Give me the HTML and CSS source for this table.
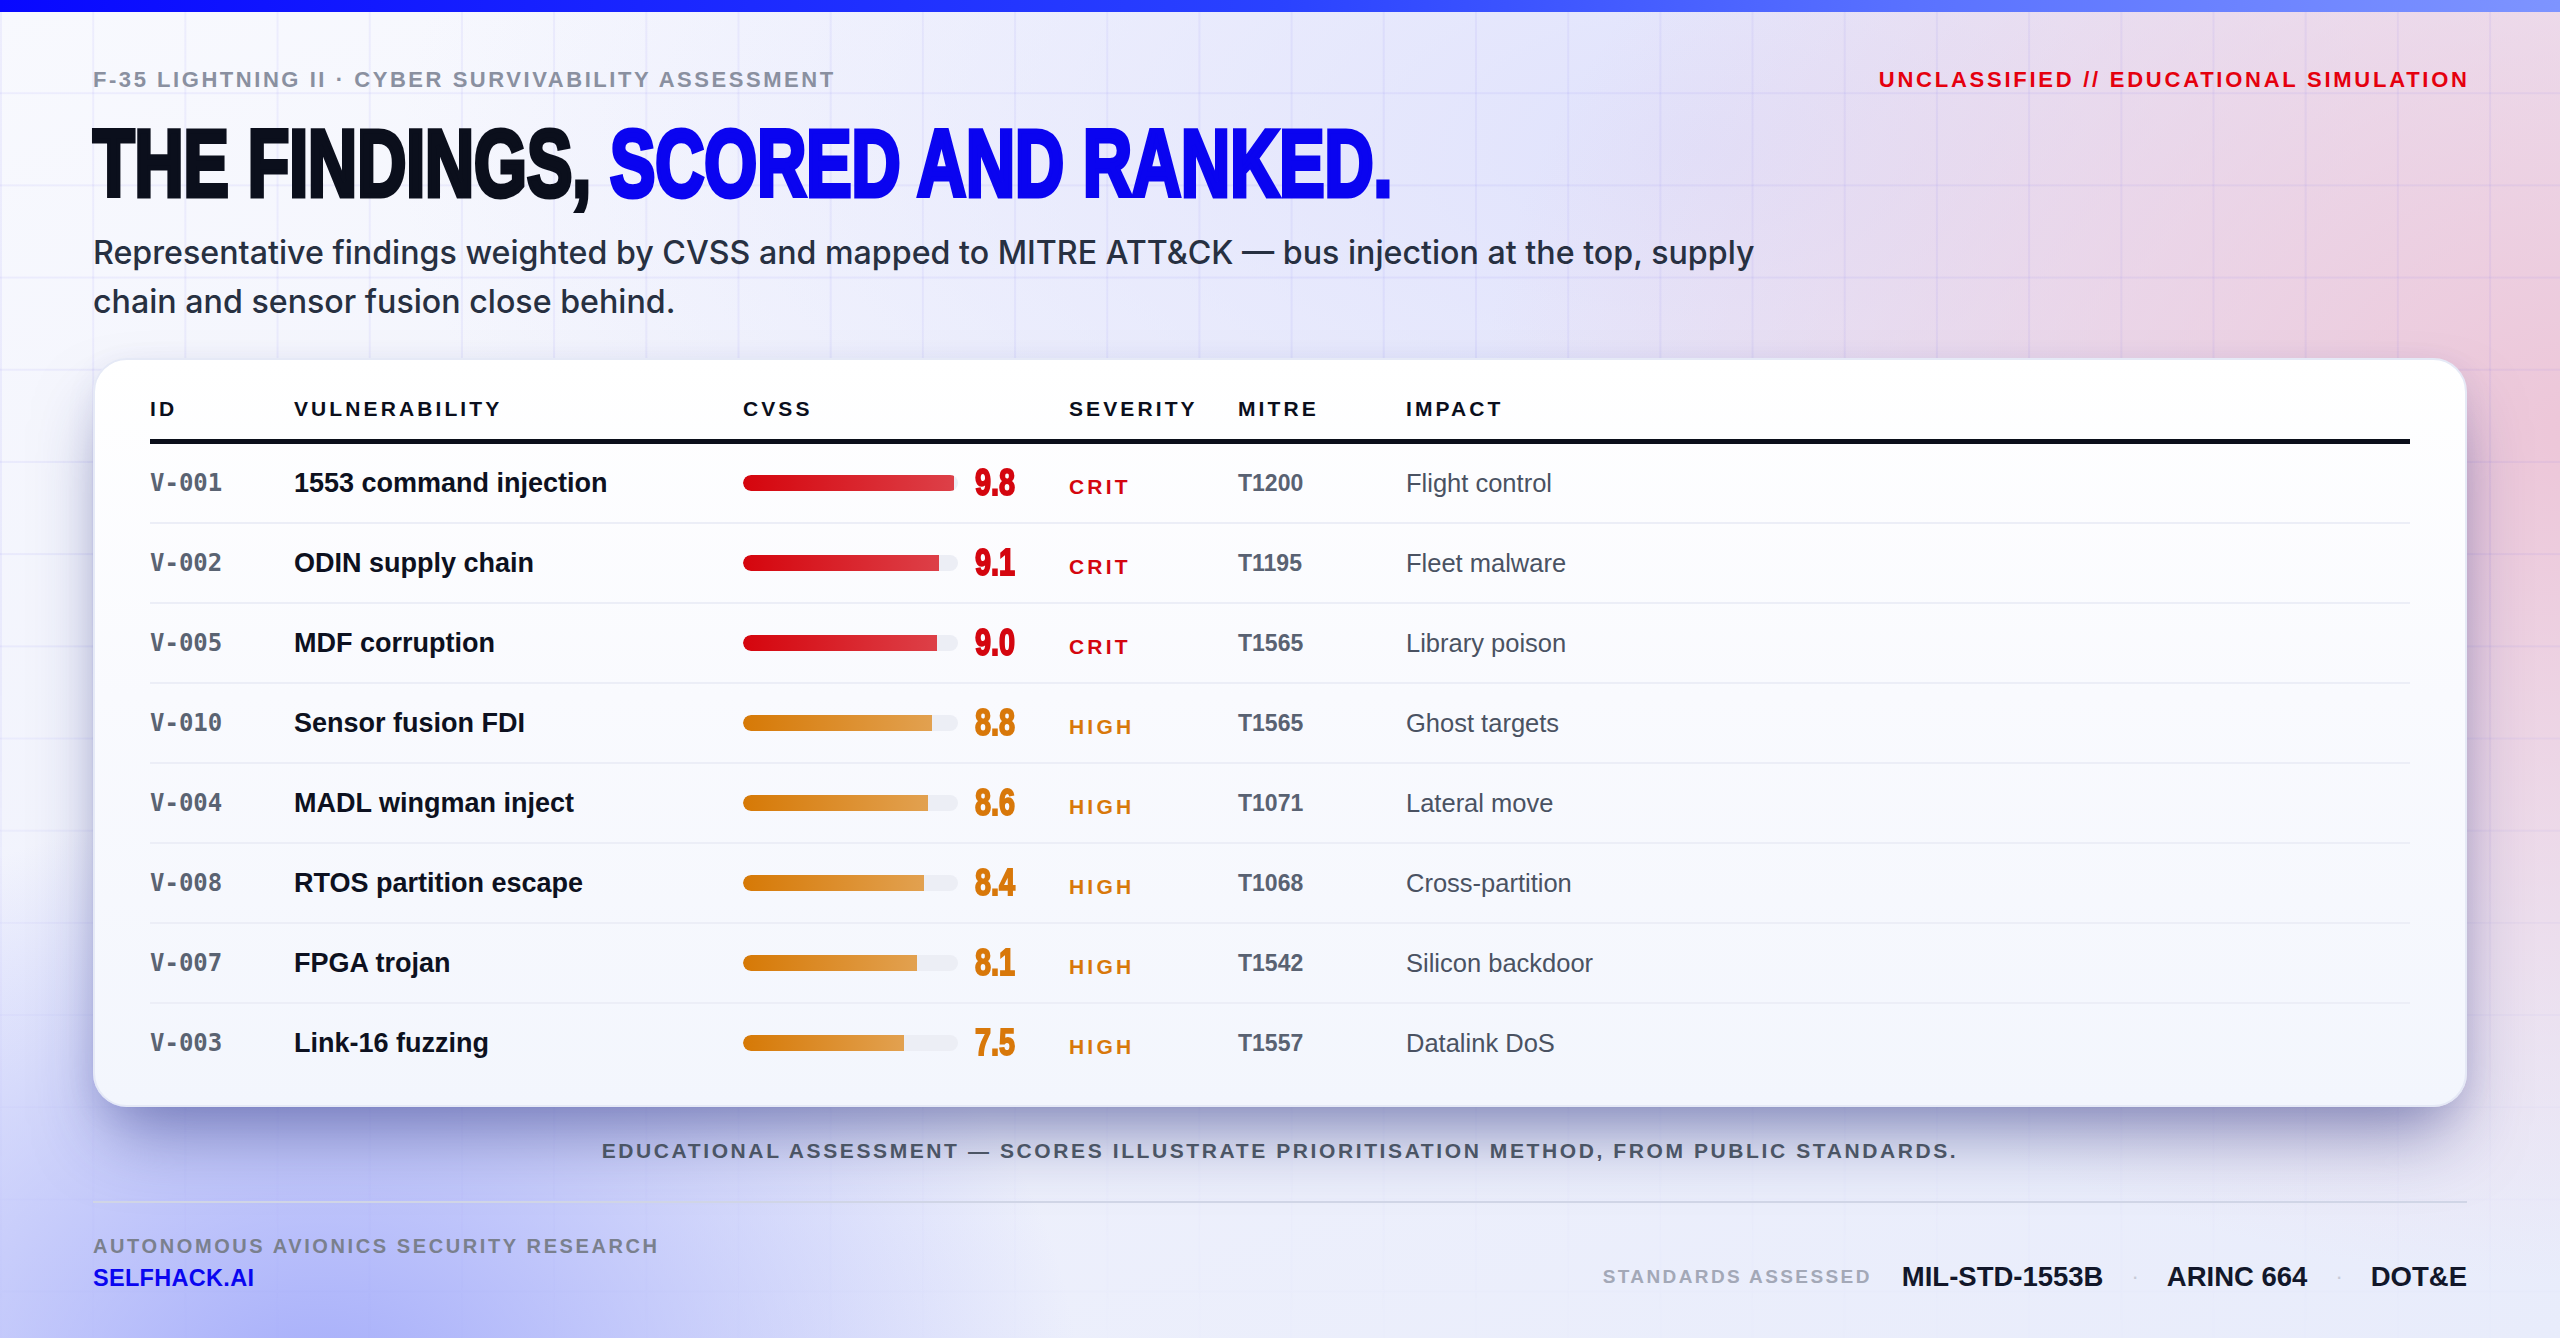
FILE: index.html
```html
<!DOCTYPE html>
<html lang="en">
<head>
<meta charset="utf-8">
<title>The findings, scored and ranked</title>
<link rel="stylesheet" href="styles.css">
</head>
<body>
<div class="grid-bg"></div>
<div class="topbar"></div>
<main class="page">
  <header class="top">
    <div class="meta">
      <span class="eyebrow">F-35 LIGHTNING II · CYBER SURVIVABILITY ASSESSMENT</span>
      <span class="classif">UNCLASSIFIED // EDUCATIONAL SIMULATION</span>
    </div>
    <h1 class="title"><span class="title-inner">THE FINDINGS, <span class="accent">SCORED AND RANKED.</span></span></h1>
    <p class="lede">Representative findings weighted by CVSS and mapped to MITRE ATT&amp;CK — bus injection at the top, supply chain and sensor fusion close behind.</p>
  </header>

  <section class="card">
    <div class="row head">
      <div>ID</div><div>VULNERABILITY</div><div>CVSS</div><div>SEVERITY</div><div>MITRE</div><div>IMPACT</div>
    </div>

    <div class="row crit">
      <div class="id">V-001</div><div class="name">1553 command injection</div>
      <div class="cvss"><div class="track"><div class="fill" style="width:98%"></div></div><span class="score"><span>9.8</span></span></div>
      <div class="sev">CRIT</div><div class="mitre">T1200</div><div class="impact">Flight control</div>
    </div>
    <div class="row crit">
      <div class="id">V-002</div><div class="name">ODIN supply chain</div>
      <div class="cvss"><div class="track"><div class="fill" style="width:91%"></div></div><span class="score"><span>9.1</span></span></div>
      <div class="sev">CRIT</div><div class="mitre">T1195</div><div class="impact">Fleet malware</div>
    </div>
    <div class="row crit">
      <div class="id">V-005</div><div class="name">MDF corruption</div>
      <div class="cvss"><div class="track"><div class="fill" style="width:90%"></div></div><span class="score"><span>9.0</span></span></div>
      <div class="sev">CRIT</div><div class="mitre">T1565</div><div class="impact">Library poison</div>
    </div>
    <div class="row high">
      <div class="id">V-010</div><div class="name">Sensor fusion FDI</div>
      <div class="cvss"><div class="track"><div class="fill" style="width:88%"></div></div><span class="score"><span>8.8</span></span></div>
      <div class="sev">HIGH</div><div class="mitre">T1565</div><div class="impact">Ghost targets</div>
    </div>
    <div class="row high">
      <div class="id">V-004</div><div class="name">MADL wingman inject</div>
      <div class="cvss"><div class="track"><div class="fill" style="width:86%"></div></div><span class="score"><span>8.6</span></span></div>
      <div class="sev">HIGH</div><div class="mitre">T1071</div><div class="impact">Lateral move</div>
    </div>
    <div class="row high">
      <div class="id">V-008</div><div class="name">RTOS partition escape</div>
      <div class="cvss"><div class="track"><div class="fill" style="width:84%"></div></div><span class="score"><span>8.4</span></span></div>
      <div class="sev">HIGH</div><div class="mitre">T1068</div><div class="impact">Cross-partition</div>
    </div>
    <div class="row high">
      <div class="id">V-007</div><div class="name">FPGA trojan</div>
      <div class="cvss"><div class="track"><div class="fill" style="width:81%"></div></div><span class="score"><span>8.1</span></span></div>
      <div class="sev">HIGH</div><div class="mitre">T1542</div><div class="impact">Silicon backdoor</div>
    </div>
    <div class="row high last">
      <div class="id">V-003</div><div class="name">Link-16 fuzzing</div>
      <div class="cvss"><div class="track"><div class="fill" style="width:75%"></div></div><span class="score"><span>7.5</span></span></div>
      <div class="sev">HIGH</div><div class="mitre">T1557</div><div class="impact">Datalink DoS</div>
    </div>
  </section>

  <p class="note">EDUCATIONAL ASSESSMENT — SCORES ILLUSTRATE PRIORITISATION METHOD, FROM PUBLIC STANDARDS.</p>

  <footer class="foot">
    <div class="brand">
      <div class="brand-sub">AUTONOMOUS AVIONICS SECURITY RESEARCH</div>
      <div class="brand-name">SELFHACK.AI</div>
    </div>
    <div class="standards">
      <span class="std-label">STANDARDS ASSESSED</span>
      <span class="std">MIL-STD-1553B</span>
      <span class="dot">·</span>
      <span class="std">ARINC 664</span>
      <span class="dot">·</span>
      <span class="std">DOT&amp;E</span>
    </div>
  </footer>
</main>
</body>
</html>
```

FILE: styles.css
```css
* { box-sizing: border-box; }

html, body {
  margin: 0;
  padding: 0;
}

body {
  width: 2560px;
  height: 1338px;
  overflow: hidden;
  position: relative;
  font-family: "Liberation Sans", Arial, sans-serif;
  color: #0b0f1c;
  background:
    radial-gradient(ellipse 760px 600px at 320px 1400px, rgba(164, 172, 250, 1), rgba(164, 172, 250, 0) 100%),
    radial-gradient(ellipse 1100px 850px at 2580px 430px, rgba(237, 198, 216, 1), rgba(237, 198, 216, 0) 100%),
    radial-gradient(ellipse 1300px 700px at 1700px 150px, rgba(222, 224, 252, 0.9), rgba(222, 224, 252, 0) 100%),
    linear-gradient(160deg, #f8f9fe 0%, #eff1fc 55%, #e8ecfb 100%);
}

.grid-bg {
  position: absolute;
  inset: 0;
  pointer-events: none;
  background-image:
    linear-gradient(to right, rgba(110, 100, 240, 0.075) 2px, transparent 2px),
    linear-gradient(to bottom, rgba(110, 100, 240, 0.075) 2px, transparent 2px);
  background-size: 92.2px 92.2px;
  background-position: 0px 0px;
  -webkit-mask-image: linear-gradient(to bottom, #000 0%, #000 45%, rgba(0,0,0,0.25) 85%, rgba(0,0,0,0.1) 100%);
  mask-image: linear-gradient(to bottom, #000 0%, #000 45%, rgba(0,0,0,0.25) 85%, rgba(0,0,0,0.1) 100%);
}

.topbar {
  position: relative;
  height: 12px;
  background: linear-gradient(90deg, #0808ff 0%, #2a42ff 50%, #5a72ff 75%, #7e94ff 100%);
}

.page {
  position: relative;
  padding: 0 93px;
}

/* ---------- header ---------- */
.meta {
  margin-top: 57px;
  display: flex;
  justify-content: space-between;
  align-items: center;
  font-size: 22px;
  line-height: 1;
  font-weight: 700;
}

.eyebrow { color: #8a90a0; letter-spacing: 2.55px; }
.classif { color: #e5000e; letter-spacing: 2.75px; margin-right: -2.75px; }

.title {
  margin: 25px 0 0;
  font-size: 95px;
  line-height: 1;
  font-weight: 700;
  white-space: nowrap;
  color: #0b0f1c;
}

.title-inner {
  display: inline-block;
  -webkit-text-stroke: 5px currentColor;
  transform: scaleX(0.715);
  transform-origin: 0 50%;
}

.accent { color: #0a04f0; }

.lede {
  margin: 17px 0 0;
  max-width: 1700px;
  font-family: "Inter", "Liberation Sans", sans-serif;
  font-size: 32.2px;
  font-weight: 500;
  line-height: 49px;
  color: #273041;
}

/* ---------- card / table ---------- */
.card {
  margin-top: 32px;
  border: 2px solid #e5e9f6;
  border-radius: 34px;
  padding: 28px 55px 23px;
  background: linear-gradient(180deg, #ffffff 0%, #f9fafe 45%, #f3f6fd 100%);
  box-shadow: 0 40px 70px -16px rgba(36, 44, 125, 0.5), 0 8px 30px rgba(60, 70, 150, 0.08);
}

.row {
  display: grid;
  grid-template-columns: 144px 449px 326px 169px 168px 1fr;
  align-items: center;
  height: 80px;
  border-bottom: 2px solid #eceef7;
}

.row.last { border-bottom: 0; height: 78px; }

.row.head {
  height: 56px;
  padding-bottom: 10px;
  border-bottom: 5px solid #0b0f1a;
  font-size: 21px;
  line-height: 1;
  font-weight: 700;
  letter-spacing: 3.1px;
  color: #0b0f1c;
}

.id {
  font-family: "DejaVu Sans Mono", "Liberation Mono", monospace;
  font-weight: 700;
  font-size: 24px;
  color: #5a6372;
}

.name {
  font-size: 27px;
  font-weight: 700;
  color: #0d1120;
}

.cvss {
  display: flex;
  align-items: center;
  gap: 17px;
}

.track {
  width: 215px;
  height: 16px;
  border-radius: 8px;
  background: #eceef5;
  overflow: hidden;
}

.fill {
  height: 100%;
  border-radius: 8px 0 0 8px;
}

.crit .fill { background: linear-gradient(90deg, #d5050d 0%, #dd4048 100%); }
.high .fill { background: linear-gradient(90deg, #d67906 0%, #e2a150 100%); }

.score {
  display: inline-block;
  width: 60px;
  font-size: 36px;
  line-height: 1;
  font-weight: 700;
}

.score span {
  display: inline-block;
  -webkit-text-stroke: 1.8px currentColor;
  transform: scaleX(0.8);
  transform-origin: 0 50%;
}

.crit .score, .crit .sev { color: #d4060f; }
.high .score, .high .sev { color: #d8780a; }

.sev {
  padding-top: 7px;
  font-size: 21px;
  font-weight: 700;
  letter-spacing: 3.2px;
}

.mitre {
  font-size: 23px;
  font-weight: 700;
  color: #596272;
}

.impact {
  font-size: 25.5px;
  color: #4a5262;
}

/* ---------- bottom ---------- */
.note {
  margin: 33px 0 0;
  text-align: center;
  font-size: 21px;
  line-height: 1;
  font-weight: 700;
  letter-spacing: 2.6px;
  color: #4b5565;
  padding-bottom: 40px;
  border-bottom: 2px solid #d0d5e6;
}

.foot {
  margin-top: 33px;
  display: flex;
  justify-content: space-between;
  align-items: flex-end;
}

.brand-sub {
  font-size: 20px;
  line-height: 1;
  font-weight: 700;
  letter-spacing: 2.6px;
  color: #7a808d;
}

.brand-name {
  margin-top: 11px;
  font-size: 23.5px;
  line-height: 1;
  font-weight: 700;
  color: #0a06f0;
  letter-spacing: 0.3px;
}

.standards {
  display: flex;
  align-items: center;
  gap: 28px;
  line-height: 1;
}

.std-label {
  font-size: 19px;
  font-weight: 700;
  letter-spacing: 2.4px;
  color: #a3a8b7;
  margin-right: 2px;
}

.std {
  font-size: 27.5px;
  font-weight: 700;
  color: #12172a;
}

.dot {
  font-size: 22px;
  color: #c6cad6;
}
```
